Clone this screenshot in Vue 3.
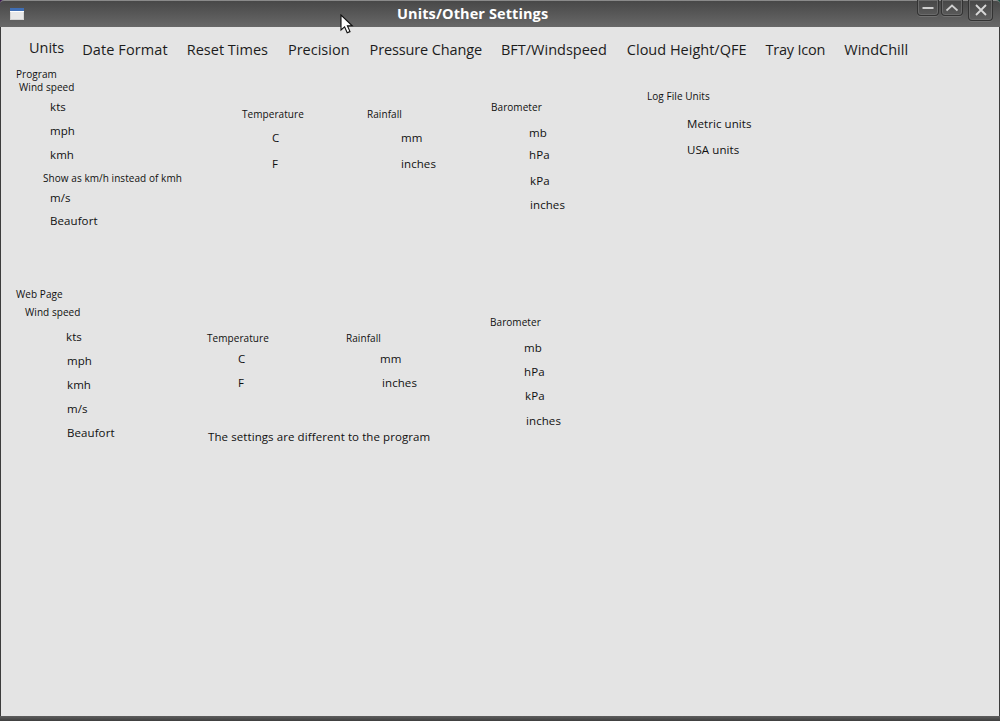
<script setup>
const tabs = ['Date Format', 'Reset Times', 'Precision', 'Pressure Change', 'BFT/Windspeed', 'Cloud Height/QFE', 'Tray Icon', 'WindChill']

const L = 14
const build = (left, width, rows) => {
  let prev = null
  const items = rows.map(([text, x, y, small]) => {
    const top = prev === null ? y - L / 2 : y - prev - L
    prev = y
    return { text, small, style: { marginLeft: x - left + 'px', marginTop: top + 'px' } }
  })
  return { width, items }
}

const program = [
  build(16, 226, [['Program', 16, 74, 1], ['Wind speed', 19, 87, 1], ['kts', 50, 107], ['mph', 50, 131], ['kmh', 50, 155], ['Show as km/h instead of kmh', 43, 178, 1], ['m/s', 50, 198], ['Beaufort', 50, 221]]),
  build(242, 125, [['Temperature', 242, 114, 1], ['C', 272, 138], ['F', 272, 164]]),
  build(367, 124, [['Rainfall', 367, 114, 1], ['mm', 401, 138], ['inches', 401, 164]]),
  build(491, 156, [['Barometer', 491, 107, 1], ['mb', 529, 133], ['hPa', 529, 155], ['kPa', 530, 181], ['inches', 530, 205]]),
  build(647, 200, [['Log File Units', 647, 96, 1], ['Metric units', 687, 124], ['USA units', 687, 150]])
]
const web = [
  build(16, 191, [['Web Page', 16, 294, 1], ['Wind speed', 25, 312, 1], ['kts', 66, 337], ['mph', 67, 361], ['kmh', 67, 385], ['m/s', 67, 409], ['Beaufort', 67, 433]]),
  build(207, 139, [['Temperature', 207, 338, 1], ['C', 238, 359], ['F', 238, 383], ['The settings are different to the program', 208, 437]]),
  build(346, 144, [['Rainfall', 346, 338, 1], ['mm', 380, 359], ['inches', 382, 383]]),
  build(490, 200, [['Barometer', 490, 322, 1], ['mb', 524, 348], ['hPa', 524, 372], ['kPa', 525, 396], ['inches', 526, 421]])
]
const sections = [program, web]
</script>

<template>
  <div class="window">
    <header class="titlebar">
      <svg class="winicon" width="14" height="12" viewBox="0 0 14 12">
        <rect x="0" y="0" width="14" height="12" fill="#d4d4d4" />
        <rect x="1" y="3.5" width="12" height="7.5" fill="#e8e8e8" />
        <rect x="0" y="0" width="14" height="3" fill="#3f6eb4" />
        <rect x="0" y="3" width="14" height="1" fill="#ffffff" />
      </svg>
      <span class="title">Units/Other Settings</span>
      <div class="controls">
        <button class="ctl small">
          <svg width="12" height="12" viewBox="0 0 12 12"><path d="M0.5 6h11" stroke="#cfcfcf" stroke-width="2" /></svg>
        </button>
        <button class="ctl small">
          <svg width="12" height="12" viewBox="0 0 12 12"><path d="M0.5 8.5L6 3.5l5.5 5" stroke="#cfcfcf" stroke-width="1.8" fill="none" /></svg>
        </button>
        <button class="ctl big">
          <svg width="12" height="12" viewBox="0 0 12 12"><path d="M1 1l10 10M11 1L1 11" stroke="#d8d8d8" stroke-width="1.8" /></svg>
        </button>
      </div>
    </header>

    <div class="body">
      <nav class="tabs">
        <span class="tab active">Units</span>
        <span v-for="t in tabs" :key="t" class="tab">{{ t }}</span>
      </nav>

      <main class="forms">
        <section v-for="(cols, i) in sections" :key="i" class="group" :class="i ? 'web' : 'program'">
          <div v-for="(col, j) in cols" :key="j" class="col" :style="{ width: col.width + 'px' }">
            <div v-for="item in col.items" :key="item.text" class="item" :class="{ small: item.small }" :style="item.style">{{ item.text }}</div>
          </div>
        </section>
      </main>
    </div>

    <footer class="bottom"></footer>

    <svg class="cursor" width="14" height="22" viewBox="0 0 14 22">
      <path d="M1 1v15l3.6-3.2 2.6 6 2.8-1.2-2.6-5.8h4.8z" fill="#fff" stroke="#111" stroke-width="1.1" />
    </svg>
  </div>
</template>

<style scoped>
.window {
  position: relative;
  width: 1000px;
  height: 721px;
  overflow: hidden;
  display: flex;
  flex-direction: column;
  background: linear-gradient(90deg, #3a1550 50%, #0f4a3c 50%);
  font-family: "Open Sans", "Noto Sans", sans-serif;
  color: #1c1c1c;
}
.titlebar {
  height: 27px;
  flex: none;
  display: flex;
  align-items: flex-start;
  position: relative;
  padding: 7px 0 0 10px;
  box-sizing: border-box;
  background: linear-gradient(#484848, #686868);
  border-top: 1px solid #8a8a8a;
  border-radius: 4px 4px 0 0;
}
.winicon { flex: none; }
.title {
  position: absolute;
  left: 397px;
  top: 4px;
  font-size: 14.5px;
  letter-spacing: 0.1px;
  line-height: 18px;
  font-weight: 700;
  color: #fff;
  white-space: nowrap;
}
.controls {
  position: absolute;
  left: 917px;
  top: -1px;
  display: flex;
  align-items: flex-start;
}
.ctl {
  padding: 0;
  display: flex;
  align-items: center;
  justify-content: center;
  background: transparent;
  border: 1px solid #333333;
  border-top: none;
  border-radius: 0 0 4px 4px;
  box-shadow: inset 0 0 0 1px #6a6a6a, 0 1px 0 #707070;
  box-sizing: border-box;
}
.ctl.small { width: 22px; height: 16px; margin-right: 2px; }
.ctl.big { width: 25px; height: 21px; margin-left: 3px; }
.body {
  flex: 1;
  display: flex;
  flex-direction: column;
  min-height: 0;
  background: #e4e4e4;
  border-left: 1px solid #3c3c3c;
  border-right: 1px solid #3c3c3c;
}
.tabs {
  height: 37px;
  flex: none;
  display: flex;
  align-items: flex-start;
  padding: 14px 0 0 28px;
  box-sizing: border-box;
  font-size: 14.5px;
  line-height: 18px;
  white-space: nowrap;
}
.tab { margin-right: 20px; }
.tab.active { margin-top: -2px; margin-right: 18px; }
.tab:nth-child(2) { letter-spacing: 0.1px; margin-right: 19px; }
.tab:nth-child(5) { letter-spacing: -0.13px; margin-right: 19px; }
.tab:nth-child(7) { margin-right: 19px; }
.tab:nth-child(8) { letter-spacing: -0.2px; margin-right: 19px; }
.forms { flex: 1; }
.group { display: flex; padding-left: 15px; }
.program { height: 209px; }
.col { flex: none; margin-top: -64px; }
.web .col { margin-top: -273px; }
.item {
  height: 14px;
  line-height: 14px;
  font-size: 11.5px;
  letter-spacing: 0.085px;
  color: #101010;
  white-space: nowrap;
}
.item.small { font-size: 10px; letter-spacing: 0.06px; }
.bottom {
  height: 5px;
  flex: none;
  background: linear-gradient(#5e5e5e, #3e3e3e);
}
.cursor { position: absolute; left: 340px; top: 14px; }
</style>
